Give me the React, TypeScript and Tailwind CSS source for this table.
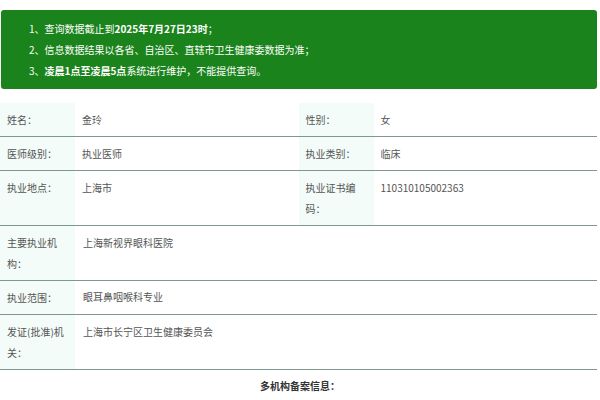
const font = "font-['Microsoft_YaHei','Noto_Sans_CJK_SC',sans-serif]";

type Cell = { label: string; value: string };

const halfRows: [Cell, Cell][] = [
  [
    { label: "姓名：", value: "金玲" },
    { label: "性别：", value: "女" },
  ],
  [
    { label: "医师级别：", value: "执业医师" },
    { label: "执业类别：", value: "临床" },
  ],
  [
    { label: "执业地点：", value: "上海市" },
    { label: "执业证书编码：", value: "110310105002363" },
  ],
];

const fullRows: Cell[] = [
  { label: "主要执业机构：", value: "上海新视界眼科医院" },
  { label: "执业范围：", value: "眼耳鼻咽喉科专业" },
  { label: "发证(批准)机关：", value: "上海市长宁区卫生健康委员会" },
];

function Label({ children }: { children: React.ReactNode }) {
  return (
    <div className="w-[75px] shrink-0 bg-[#f3fcf8] py-[6px] pl-[7px] pr-[11px]">
      {children}
    </div>
  );
}

export default function App() {
  return (
    <div className={`${font} w-[600px] bg-white pt-[10px] text-[10px] leading-[21px] text-[#555]`}>
      <div className="ml-px w-[596px] rounded-[3px] bg-[#1b831b] py-[8px] pl-[28px] text-white">
        <p>
          1、查询数据截止到<b>2025年7月27日23时</b>；
        </p>
        <p>2、信息数据结果以各省、自治区、直辖市卫生健康委数据为准；</p>
        <p>
          3、<b>凌晨1点至凌晨5点</b>系统进行维护，不能提供查询。
        </p>
      </div>

      <div className="mt-[14px] w-[597px]">
        {halfRows.map((row, i) => (
          <div key={i} className="flex border-b border-[#7f988f]">
            {row.map((c) => (
              <div key={c.label} className="flex w-1/2">
                <Label>{c.label}</Label>
                <div className="flex-1 py-[6px] pl-[7px]">{c.value}</div>
              </div>
            ))}
          </div>
        ))}
        {fullRows.map((c, i) => (
          <div key={c.label} className="flex border-b border-[#7f988f]">
            <Label>{c.label}</Label>
            <div className={`flex-1 pl-[8px] ${i === 1 ? "py-[5px]" : "py-[6px]"}`}>{c.value}</div>
          </div>
        ))}
      </div>

      <p className="mt-[5px] text-center text-[10px] font-bold text-[#333]">多机构备案信息：</p>
    </div>
  );
}
